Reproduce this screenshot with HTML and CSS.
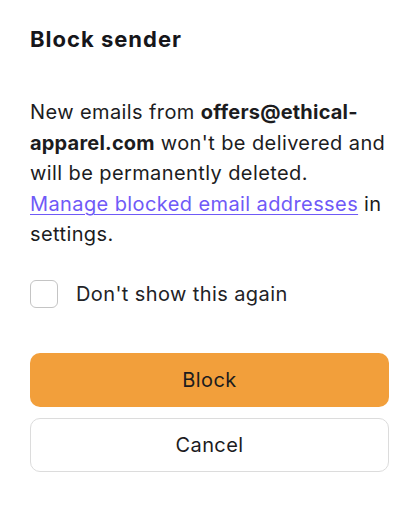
FILE: index.html
```html
<!DOCTYPE html>
<html lang="en">
<head>
<meta charset="utf-8">
<title>Block sender</title>
<link rel="stylesheet" href="styles.css">
</head>
<body>
<div class="dialog">
  <h1 class="title">Block sender</h1>
  <p class="message">New emails from <strong>offers@ethical-apparel.com</strong> won't be delivered and will be permanently deleted. <a href="#" class="link">Manage blocked email addresses</a> in settings.</p>
  <label class="check-row">
    <span class="checkbox"></span>
    <span class="check-label">Don't show this again</span>
  </label>
  <div class="actions">
    <button class="btn btn-primary">Block</button>
    <button class="btn btn-secondary">Cancel</button>
  </div>
</div>
</body>
</html>
```

FILE: styles.css
```css
html, body {
  margin: 0;
  padding: 0;
  background: #ffffff;
}
body {
  font-family: Inter, "Noto Sans", sans-serif;
  color: #1c1c1e;
}
.dialog {
  width: 420px;
  height: 505px;
  box-sizing: border-box;
  padding: 24px 31px 0 30px;
  display: flex;
  flex-direction: column;
}
.title {
  margin: 0;
  font-size: 22px;
  line-height: 30px;
  font-weight: 700;
  letter-spacing: 1px;
  color: #16161a;
}
.message {
  margin: 43px 0 0;
  font-size: 20px;
  line-height: 30.6px;
  letter-spacing: 0.4px;
  color: #1c1c1e;
}
.message strong {
  font-weight: 700;
  letter-spacing: 0.2px;
}
.link {
  color: #6f5af7;
  text-decoration: underline;
  text-underline-offset: 3px;
  text-decoration-thickness: 1px;
}
.check-row {
  margin-top: 30px;
  display: flex;
  align-items: center;
  gap: 18px;
}
.checkbox {
  width: 26px;
  height: 26px;
  border: 1.5px solid #c4c4c4;
  border-radius: 6px;
  background: #fff;
  flex: none;
}
.check-label {
  font-size: 20px;
  line-height: 28px;
  letter-spacing: 0.4px;
  color: #222226;
}
.actions {
  margin-top: 45px;
  display: flex;
  flex-direction: column;
  gap: 11px;
}
.btn {
  font-family: Inter, "Noto Sans", sans-serif;
  font-size: 20px;
  letter-spacing: 0.4px;
  height: 54px;
  border-radius: 10px;
  width: 100%;
  color: #1c1c1e;
  cursor: pointer;
}
.btn-primary {
  background: #f29f3b;
  border: none;
}
.btn-secondary {
  background: #fff;
  border: 1px solid #dcdcdc;
  height: 54px;
}
```
